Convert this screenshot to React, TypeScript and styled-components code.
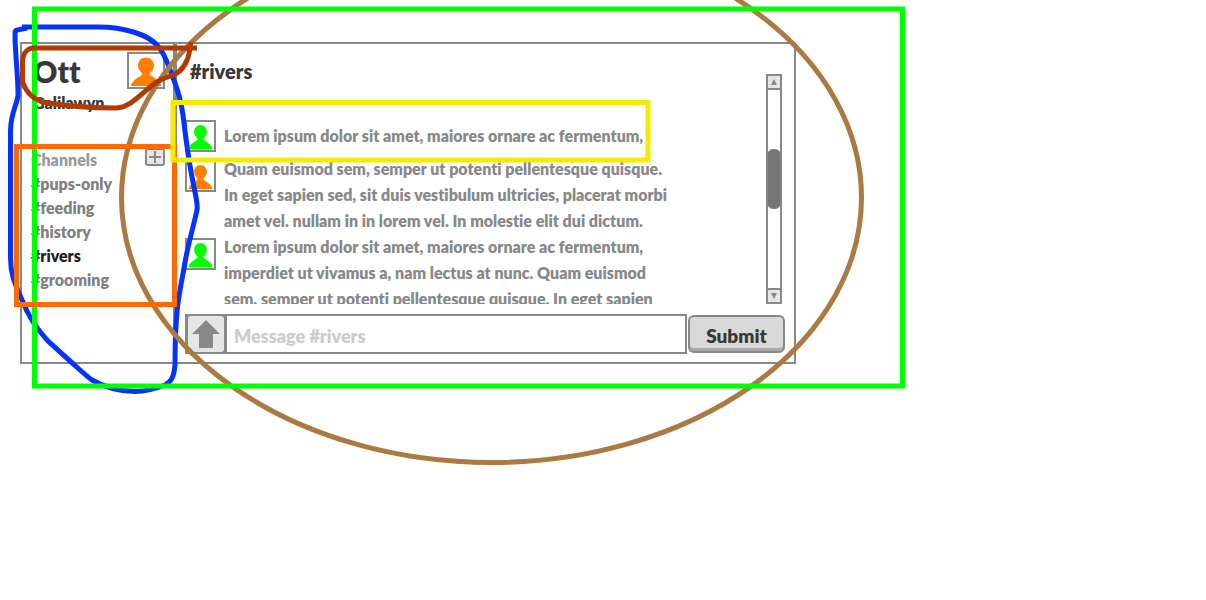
import React from "react";
import styled, { createGlobalStyle } from "styled-components";

const line = "#888888";

const GlobalStyle = createGlobalStyle`
  *, *::before, *::after { box-sizing: border-box; }
  body {
    margin: 0;
    background: #fff;
    color: #383838;
    font-family: Lato, "Open Sans", sans-serif;
    font-weight: 800;
    font-variant-ligatures: none;
  }
  h1, h2, h3, p, ul { margin: 0; padding: 0; }
  button, input { font: inherit; }
`;

const Page = styled.div`
  position: relative;
  min-height: 100vh;
  padding: 42px 20px;
  overflow: hidden;
`;

const Window = styled.div`
  display: flex;
  max-width: 776px;
  border: 2px solid ${line};
`;

const Sidebar = styled.aside`
  flex: 0 0 155px;
  padding: 8px 8px 8px 9px;
  border-right: 4px solid ${line};
`;

const Profile = styled.div`
  display: flex;
  justify-content: space-between;
  padding-left: 2px;
`;

const UserName = styled.h1`
  font-size: 30px;
  line-height: 38px;
  font-weight: 800;
`;

const RealName = styled.p`
  padding-left: 2px;
  font-size: 16px;
  line-height: 26px;
  font-weight: 800;
`;

const ChannelHeader = styled.div`
  display: flex;
  justify-content: space-between;
  align-items: flex-start;
  height: 24px;
  margin-top: 32px;
`;

const ChannelHeading = styled.h2`
  font-size: 16px;
  line-height: 24px;
  font-weight: 800;
  color: #999;
`;

const AddButton = styled.button`
  display: flex;
  width: 20px;
  height: 18px;
  padding: 0;
  align-items: center;
  justify-content: center;
  border: 2px solid ${line};
  border-radius: 3px;
  background: #e6e6e6;
`;

const ChannelList = styled.ul`
  list-style: none;
`;

const ChannelLink = styled.a<{ $active: boolean }>`
  display: block;
  font-size: 16px;
  line-height: 24px;
  color: ${(p) => (p.$active ? "#222" : "#808080")};
  text-decoration: none;
`;

const Main = styled.main`
  flex: 1;
  min-width: 0;
  padding: 0 9px 8px 8px;
`;

const Conversation = styled.section`
  display: grid;
  grid-template-columns: minmax(0, 1fr) 16px;
  grid-template-rows: 72px 188px;
  padding-right: 3px;
`;

const ChannelTitle = styled.h2`
  padding: 13px 5px;
  font-size: 20px;
  line-height: 28px;
  font-weight: 800;
`;

const Messages = styled.ul`
  grid-column: 1;
  grid-row: 2;
  overflow: hidden;
  list-style: none;
`;

const Message = styled.li`
  display: flex;
  gap: 8px;
  min-height: 40px;
`;

const MessageText = styled.p`
  align-self: center;
  font-size: 16px;
  line-height: 26px;
  color: ${line};
  white-space: nowrap;
`;

const AvatarFrame = styled.span<{ $large?: boolean }>`
  display: flex;
  flex: none;
  width: ${(p) => (p.$large ? 38 : 31)}px;
  height: ${(p) => (p.$large ? 37 : 32)}px;
  margin-top: ${(p) => (p.$large ? 0 : 4)}px;
  border: 2px solid ${line};
  background: #fff;
  svg { width: 100%; height: 100%; }
`;

const Scrollbar = styled.div`
  grid-column: 2;
  grid-row: 1 / 3;
  display: flex;
  flex-direction: column;
  margin-top: 30px;
  border: 2px solid ${line};
`;

const ScrollButton = styled.button<{ $end?: boolean }>`
  display: flex;
  height: 14px;
  padding: 0;
  align-items: center;
  justify-content: center;
  border: 0 solid ${line};
  border-width: ${(p) => (p.$end ? "2px 0 0" : "0 0 2px")};
  background: #e6e6e6;
`;

const ScrollTrack = styled.div`
  flex: 1;
  padding-top: 59px;
`;

const ScrollThumb = styled.div`
  height: 60px;
  margin: 0 -1px;
  border: 1px solid #808080;
  border-radius: 6px;
  background: #757575;
`;

const Composer = styled.form`
  display: flex;
  align-items: center;
  gap: 1px;
  margin-top: 10px;
`;

const Field = styled.div`
  display: flex;
  flex: 1;
  min-width: 0;
  height: 40px;
  border: 2px solid ${line};
`;

const UploadSlot = styled.div`
  display: flex;
  flex: none;
  width: 40px;
  padding: 0 3px 0 1px;
  background: ${line};
`;

const UploadButton = styled.button`
  display: flex;
  flex: 1;
  padding: 0;
  align-items: center;
  justify-content: center;
  border: 0;
  border-radius: 3px;
  background: #e6e6e6;
`;

const MessageInput = styled.input`
  flex: 1;
  min-width: 0;
  padding: 4px 7px 0;
  border: 0;
  outline: 0;
  background: #fff;
  color: #383838;
  font-size: 18px;
  font-weight: 800;
  &::placeholder { color: #ccc; opacity: 1; }
`;

const SubmitButton = styled.button`
  flex: none;
  width: 97px;
  height: 38px;
  padding: 4px 0 0;
  border: 2px solid ${line};
  border-radius: 6px;
  background: #d9d9d9;
  box-shadow: inset 0 -3px #aaa;
  color: #383838;
  font-size: 19px;
  line-height: 24px;
  font-weight: 800;
`;

const Markup = styled.svg`
  position: absolute;
  top: 0;
  left: 0;
  pointer-events: none;
`;

function Avatar({ color, large }: { color: string; large?: boolean }) {
  return (
    <AvatarFrame $large={large}>
      <svg viewBox="0 0 34 34" preserveAspectRatio="none" fill={color} aria-hidden="true">
        <path d="M17 3.500C21.500 3.500 25 7 25 11.500C25 15 23.500 17.500 21.500 19C20.500 20 20.500 21.500 22 22.500C27 25 30.500 28 32.500 33H1.500C3.500 28 7 25 12 22.500C13.500 21.500 13.500 20 12.500 19C10.500 17.500 9 15 9 11.500C9 7 12.500 3.500 17 3.500Z" />
      </svg>
    </AvatarFrame>
  );
}

const channels = ["#pups-only", "#feeding", "#history", "#rivers", "#grooming"];

const messages = [
  { color: "#00ff00", lines: ["Lorem ipsum dolor sit amet, maiores ornare ac fermentum,"] },
  {
    color: "#ff8000",
    lines: [
      "Quam euismod sem, semper ut potenti pellentesque quisque.",
      "In eget sapien sed, sit duis vestibulum ultricies, placerat morbi",
      "amet vel. nullam in in lorem vel. In molestie elit dui dictum.",
    ],
  },
  {
    color: "#00ff00",
    lines: [
      "Lorem ipsum dolor sit amet, maiores ornare ac fermentum,",
      "imperdiet ut vivamus a, nam lectus at nunc. Quam euismod",
      "sem, semper ut potenti pellentesque quisque. In eget sapien",
    ],
  },
];

export default function App() {
  return (
    <Page>
      <GlobalStyle />
      <Window>
        <Sidebar>
          <Profile>
            <UserName>Ott</UserName>
            <Avatar color="#ff8000" large />
          </Profile>
          <RealName>Galilawyn</RealName>
          <ChannelHeader>
            <ChannelHeading>Channels</ChannelHeading>
            <AddButton type="button" aria-label="Add channel">
              <svg width="12" height="12" stroke={line} strokeWidth="2" aria-hidden="true">
                <path d="M6 0V12M0 6H12" />
              </svg>
            </AddButton>
          </ChannelHeader>
          <ChannelList>
            {channels.map((name) => (
              <li key={name}>
                <ChannelLink href={name} $active={name === "#rivers"}>{name}</ChannelLink>
              </li>
            ))}
          </ChannelList>
        </Sidebar>
        <Main>
          <Conversation>
            <ChannelTitle>#rivers</ChannelTitle>
            <Messages>
              {messages.map((message, i) => (
                <Message key={i}>
                  <Avatar color={message.color} />
                  <MessageText>
                    {message.lines.map((text, n) => (
                      <React.Fragment key={n}>
                        {n > 0 && <br />}
                        {text}
                      </React.Fragment>
                    ))}
                  </MessageText>
                </Message>
              ))}
            </Messages>
            <Scrollbar>
              <ScrollButton type="button" aria-label="Scroll up">
                <svg width="6" height="6" fill={line} aria-hidden="true"><path d="M3 0L6 6H0Z" /></svg>
              </ScrollButton>
              <ScrollTrack>
                <ScrollThumb />
              </ScrollTrack>
              <ScrollButton type="button" aria-label="Scroll down" $end>
                <svg width="6" height="6" fill={line} aria-hidden="true"><path d="M3 6L6 0H0Z" /></svg>
              </ScrollButton>
            </Scrollbar>
          </Conversation>
          <Composer onSubmit={(e) => e.preventDefault()}>
            <Field>
              <UploadSlot>
                <UploadButton type="button" aria-label="Upload file">
                  <svg width="28" height="28" fill={line} aria-hidden="true">
                    <path d="M14 0L28 14H21V28H7V14H0Z" />
                  </svg>
                </UploadButton>
              </UploadSlot>
              <MessageInput type="text" aria-label="Message #rivers" placeholder="Message #rivers" />
            </Field>
            <SubmitButton type="submit">Submit</SubmitButton>
          </Composer>
        </Main>
      </Window>
      <Markup width="1206" height="600" fill="none" strokeWidth="5" aria-hidden="true">
        <path
          stroke="#0433ff"
          d="M22 27H98C125 27 148 35 157 45C165 53 168 65 172 75C178 90 181 100 183 115C186 140 188 158 193 182C195 194 198 202 197 210C195 220 190 237 186 257C182 280 178 298 177 312C175 335 175 350 175 365C174 377 171 382 165 385C155 389 145 391.500 135 391.500C117 391 104 387 92 380C85 375 78 368 70 361L48 341C36 328 27 313 22 300C15 284 10.500 275 10.500 258V130C11 113 16 107 18 96C18.500 80 15 55 15 33C15 29 19 30 27 28"
        />
        <ellipse cx="491.500" cy="197.500" rx="370" ry="265" stroke="#ab7942" />
        <rect x="34.500" y="9" width="868" height="377" stroke="#00ff00" />
        <rect x="16.500" y="146.500" width="158" height="158" stroke="#ff6a00" />
        <path
          stroke="#b03a00"
          d="M197 48H34C26 48 22.500 55 22.500 63V82C26 92 33 99 43 102C65 106 90 108 115 108C132 108 145 89 157 82C163 78 168 77 173 75C184 71 190 58 190.500 42"
        />
        <rect x="173" y="102.500" width="475" height="57.500" stroke="#f6eb00" />
      </Markup>
    </Page>
  );
}
